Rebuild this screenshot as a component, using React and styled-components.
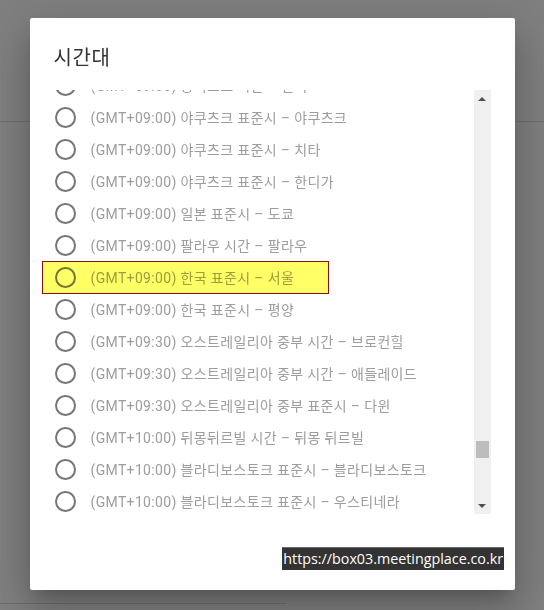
import React, { useEffect, useRef } from 'react'
import styled, { createGlobalStyle } from 'styled-components'

const ROW = 32
const BEFORE = 7

const zones = [
  '(GMT+08:00) 중국 표준시 – 상하이',
  '(GMT+08:00) 홍콩 표준시 – 홍콩',
  '(GMT+08:00) 필리핀 표준시 – 마닐라',
  '(GMT+08:00) 싱가포르 표준시 – 싱가포르',
  '(GMT+08:00) 타이베이 표준시 – 타이베이',
  '(GMT+08:45) 오스트레일리아 중서부 표준시 – 유클라',
  '(GMT+09:00) 동티모르 시간 – 딜리',
  '(GMT+09:00) 야쿠츠크 표준시 – 야쿠츠크',
  '(GMT+09:00) 야쿠츠크 표준시 – 치타',
  '(GMT+09:00) 야쿠츠크 표준시 – 한디가',
  '(GMT+09:00) 일본 표준시 – 도쿄',
  '(GMT+09:00) 팔라우 시간 – 팔라우',
  '(GMT+09:00) 한국 표준시 – 서울',
  '(GMT+09:00) 한국 표준시 – 평양',
  '(GMT+09:30) 오스트레일리아 중부 시간 – 브로컨힐',
  '(GMT+09:30) 오스트레일리아 중부 시간 – 애들레이드',
  '(GMT+09:30) 오스트레일리아 중부 표준시 – 다윈',
  '(GMT+10:00) 뒤몽뒤르빌 시간 – 뒤몽 뒤르빌',
  '(GMT+10:00) 블라디보스토크 표준시 – 블라디보스토크',
  '(GMT+10:00) 블라디보스토크 표준시 – 우스티네라',
  '(GMT+10:00) 오스트레일리아 동부 표준시 – 브리즈번',
  '(GMT+10:00) 오스트레일리아 동부 표준시 – 린드먼',
  '(GMT+10:00) 채모로 표준시 – 괌',
]

const SELECTED = '(GMT+09:00) 한국 표준시 – 서울'

const GlobalStyle = createGlobalStyle`
  html, body {
    margin: 0;
    padding: 0;
    background: #fff;
  }
  body {
    font-family: Roboto, "Noto Sans CJK KR", sans-serif;
  }
`

const Page = styled.div`
  width: 544px;
  height: 610px;
  display: flex;
  flex-direction: column;
  overflow: hidden;
`

const PageHeader = styled.div`
  height: 121px;
  border-bottom: 1px solid #e0e0e0;
`

const PageMain = styled.div`
  flex: 1;
`

const PageRule = styled.div`
  width: 286px;
  height: 6px;
  border-top: 1px solid #dcdcdc;
`

const Backdrop = styled.div`
  position: fixed;
  inset: 0;
  background: rgba(0, 0, 0, 0.5);
  display: flex;
  align-items: center;
  justify-content: center;
  padding-bottom: 2px;
`

const Dialog = styled.div`
  width: 485px;
  height: 572px;
  box-sizing: border-box;
  background: #fff;
  border-radius: 2px;
  padding: 24px 24px 0 24px;
  display: flex;
  flex-direction: column;
  box-shadow: 0 11px 15px -7px rgba(0, 0, 0, 0.2),
    0 24px 38px 3px rgba(0, 0, 0, 0.14), 0 9px 46px 8px rgba(0, 0, 0, 0.12);
`

const Title = styled.h2`
  margin: 0 0 16px 0;
  font-size: 20px;
  line-height: 32px;
  font-weight: 400;
  letter-spacing: 0.6px;
  color: #333;
`

const ListArea = styled.div`
  height: 424px;
  display: flex;
  margin-left: -12px;
`

const List = styled.div`
  flex: 1;
  overflow: hidden;
  padding-left: 12px;
`

const Row = styled.label`
  position: relative;
  height: ${ROW}px;
  display: flex;
  align-items: center;
  cursor: pointer;
`

const Radio = styled.span`
  width: 17px;
  height: 17px;
  margin-left: 1px;
  margin-right: 15px;
  border: 2px solid #757575;
  border-radius: 50%;
  flex-shrink: 0;
`

const Label = styled.span`
  font-size: 14px;
  letter-spacing: 0.35px;
  color: #9d9d9d;
  white-space: nowrap;
`

const Highlight = styled.span`
  position: absolute;
  left: -12px;
  top: 0;
  width: 287px;
  height: 33px;
  box-sizing: border-box;
  background: #ffff66;
  border: 1px solid #8b1010;
  mix-blend-mode: multiply;
  pointer-events: none;
`

const ScrollTrack = styled.div`
  width: 17px;
  background: #f0f0f0;
  display: flex;
  flex-direction: column;
  align-items: center;
`

const Arrow = styled.div`
  height: 17px;
  width: 17px;
  display: flex;
  align-items: center;
  justify-content: center;

  &::before {
    content: '';
    border-left: 4px solid transparent;
    border-right: 4px solid transparent;
    ${p => (p.down ? 'border-top' : 'border-bottom')}: 4px solid #505050;
  }
`

const ThumbRail = styled.div`
  flex: 1;
  width: 100%;
  position: relative;
`

const Thumb = styled.div`
  position: absolute;
  left: 2px;
  right: 2px;
  height: 17px;
  background: #bdbdbd;
`

const Watermark = styled.div`
  position: fixed;
  right: 40px;
  top: 547px;
  height: 23px;
  box-sizing: border-box;
  padding: 0 1px;
  background: #333;
  border-top: 1px solid #6a6a6a;
  color: #fff;
  font-family: "Open Sans", sans-serif;
  font-size: 14.3px;
  line-height: 21px;
`

function TimezoneList() {
  const ref = useRef(null)
  useEffect(() => {
    if (ref.current) ref.current.scrollTop = (BEFORE - 1) * ROW + 21
  }, [])
  return (
    <List ref={ref}>
      {zones.map(z => (
        <Row key={z}>
          <Radio />
          <Label>{z}</Label>
          {z === SELECTED && <Highlight />}
        </Row>
      ))}
    </List>
  )
}

export default function App() {
  return (
    <>
      <GlobalStyle />
      <Page>
        <PageHeader />
        <PageMain />
        <PageRule />
      </Page>
      <Backdrop>
        <Dialog>
          <Title>시간대</Title>
          <ListArea>
            <TimezoneList />
            <ScrollTrack>
              <Arrow />
              <ThumbRail>
                <Thumb style={{ top: 334 }} />
              </ThumbRail>
              <Arrow down />
            </ScrollTrack>
          </ListArea>
        </Dialog>
      </Backdrop>
      <Watermark>https://box03.meetingplace.co.kr</Watermark>
    </>
  )
}
